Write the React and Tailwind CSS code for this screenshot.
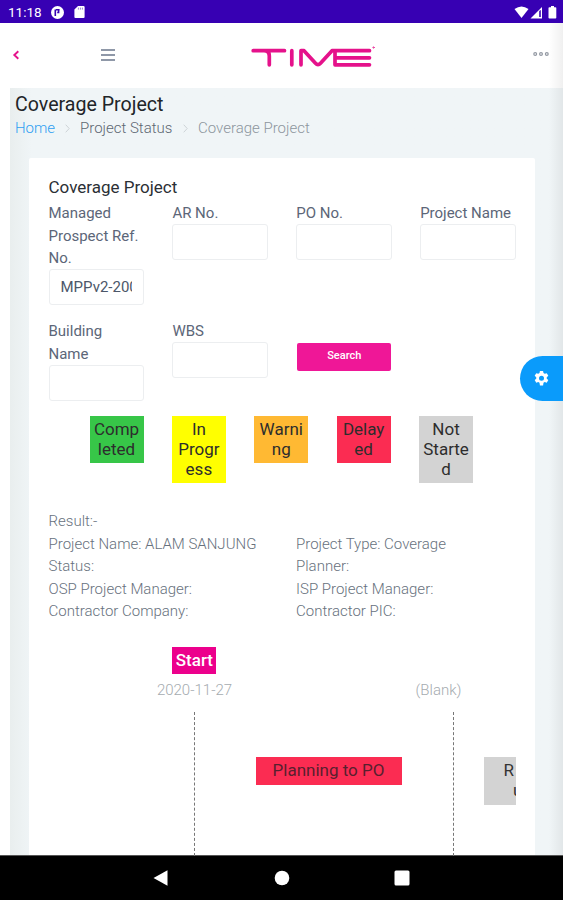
import React from "react";

const fields = [
  { label: "Managed Prospect Ref. No.", value: "MPPv2-200" },
  { label: "AR No." },
  { label: "PO No." },
  { label: "Project Name" },
  { label: "Building Name" },
  { label: "WBS" },
];

const legend = [
  { lines: ["Comp", "leted"], cls: "bg-[#37c648]" },
  { lines: ["In", "Progr", "ess"], cls: "bg-[#ffff00]" },
  { lines: ["Warni", "ng"], cls: "bg-[#ffb933]" },
  { lines: ["Delay", "ed"], cls: "bg-[#fb2c52]" },
  { lines: ["Not", "Starte", "d"], cls: "bg-[#d3d3d3]" },
];

function StatusBar() {
  return (
    <div className="flex h-[23px] shrink-0 items-center bg-[#3700b3] pt-px pr-[6px] pl-[8px] text-white">
      <span className="w-[43px] text-[13.5px] leading-[20px]">11:18</span>
      <svg className="h-[13px] w-[13px]" viewBox="0 0 13 13">
        <circle cx="6.5" cy="6.5" r="6.5" fill="#fff" />
        <path d="M4.300 10V3.400M4.900 3.800H8.600M7.600 3.400V6.500H6.200" fill="none" stroke="#3700b3" strokeWidth="1.600" />
      </svg>
      <svg className="ml-[10px] h-[12px] w-[11px]" viewBox="0 0 11 12">
        <path d="M4 0H9.500Q10.600 0 10.600 1V11Q10.600 12 9.500 12H1.400Q.4 12 .4 11V3.600Z" fill="#fff" />
        <path d="M4.400 1.600V3.600M6.400 1.600V3.600M8.400 1.600V3.600" stroke="#3700b3" strokeWidth=".5" />
      </svg>
      <svg className="ml-auto h-[13px] w-[43px]" viewBox="0 0 43 13">
        <path d="M.5 3Q7.500-2 14.500 3L7.500 12Z" fill="#fff" />
        <path d="M28 1V12.500H16.500Z" fill="#fff" />
        <path d="M25.200 5V11H26.800V4Z" fill="#3700b3" />
        <path d="M35.500 1.200H37V0H40V1.200H41.500Q42.300 1.200 42.300 2V11.700Q42.300 12.500 41.500 12.500H35.500Q34.500 12.500 34.500 11.700V2Q34.500 1.200 35.500 1.200Z" fill="#fff" />
      </svg>
    </div>
  );
}

function Logo() {
  return (
    <svg className="h-[24px] w-[126px]" viewBox="250 44 126 24" fill="none" stroke="#e5128b" strokeWidth="3.700" strokeLinecap="round" strokeLinejoin="round">
      <path d="M253.200 50.700H284.500M264 50.700Q269.300 50.700 269.300 56V64.800" />
      <path d="M291.800 50.700V64.800" />
      <path d="M301 64.800V50.700H304L315.500 63.300Q318 66 320.500 63.300L332 50.700H369.500" />
      <path d="M335 51V64.800H369.500M335 57.800H369.500" />
      <circle cx="373.500" cy="47.500" r=".7" strokeWidth=".7" />
    </svg>
  );
}

function Header() {
  return (
    <div className="flex h-[65px] shrink-0 items-center bg-white pr-[13px] pb-px pl-[12px]">
      <svg className="h-[10px] w-[8px]" viewBox="0 0 8 10" fill="none" stroke="#e5128b" strokeWidth="1.900">
        <path d="M6.300 1.200L2.300 5L6.300 8.800" />
      </svg>
      <svg className="ml-[81px] h-[12px] w-[14px]" viewBox="0 0 14 12" stroke="#6b778c" strokeWidth="1.600">
        <path d="M0 1H14M0 6H14M0 11H14" />
      </svg>
      <div className="mt-[2px] ml-[135px] flex">
        <Logo />
      </div>
      <svg className="mr-px -mt-[3px] ml-auto h-[6px] w-[16px]" viewBox="0 0 16 6" fill="none" stroke="#9298a2" strokeWidth="1.200">
        <circle cx="2.200" cy="3" r="1.400" />
        <circle cx="8" cy="3" r="1.400" />
        <circle cx="13.800" cy="3" r="1.400" />
      </svg>
    </div>
  );
}

function Crumb() {
  return (
    <svg className="h-[9px] w-[5px]" viewBox="0 0 5 9" fill="none" stroke="#cdd3d6" strokeWidth="1">
      <path d="M.7.700L4.200 4.500L.7 8.300" />
    </svg>
  );
}

function Field({ label, value }) {
  return (
    <label className="flex flex-col">
      <span className="text-[15px] leading-[22.5px] text-[#5c6678]">{label}</span>
      <span className="-mt-[0.5px] flex h-[36px] items-center overflow-hidden rounded-[3px] border border-[#eceef0] px-[11px]">
        <span className="overflow-hidden text-[15px] whitespace-nowrap text-[#4c5769]">{value}</span>
      </span>
    </label>
  );
}

function Details({ rows }) {
  return (
    <div className="flex-1">
      {rows.map((row) => (
        <div key={row}>{row}</div>
      ))}
    </div>
  );
}

function Timeline() {
  return (
    <div className="relative mt-[24.500px] h-[209px] overflow-hidden text-[17px] leading-[20px]">
      <div className="absolute top-0 left-[123.900px] h-[27px] w-[44px] bg-[#ec008c] pt-[3px] text-center font-medium text-white">Start</div>
      <div className="absolute top-[33px] left-[96px] w-[100px] text-center text-[15px] font-light text-[#a5abb0]">2020-11-27</div>
      <div className="absolute top-[33px] left-[340px] w-[100px] text-center text-[15px] font-light text-[#a5abb0]">(Blank)</div>
      <div className="absolute top-[65px] left-[145px] h-[144px] border-l border-dashed border-[#777]" />
      <div className="absolute top-[65px] left-[404px] h-[144px] border-l border-dashed border-[#777]" />
      <div className="absolute top-[110px] left-[207px] h-[28px] w-[146px] bg-[#fb2c52] pt-[3px] text-center text-[#58202f]">Planning to PO</div>
      <div className="absolute top-[110px] left-[435px] h-[48px] w-[54px] bg-[#d3d3d3] pt-[3px] text-[#333]">
        <div className="pl-[20px]">R</div>
        <div className="pl-[29.500px]">u</div>
      </div>
    </div>
  );
}

function NavBar() {
  return (
    <div className="flex h-[45px] shrink-0 items-center justify-center border-t border-[#555] bg-black">
      <svg className="h-[16px] w-[258px]" viewBox="0 0 258 16" fill="#fff">
        <path d="M.5 8L14.500 .3V15.700Z" />
        <circle cx="129" cy="8" r="7.300" />
        <rect x="241.500" y=".5" width="15" height="15" rx="1.500" />
      </svg>
    </div>
  );
}

export default function App() {
  return (
    <div className="relative flex h-[900px] w-[563px] flex-col overflow-hidden bg-white font-['Roboto',sans-serif]">
      <StatusBar />
      <Header />
      <main className="ml-[10px] flex h-[767px] flex-col bg-linear-to-r from-[#e9eeee] via-[#f0f5f7] via-[4%] to-[#f0f5f7] pt-[5px] pr-[28px] pl-[19px]">
        <h1 className="-ml-[14px] text-[19.600px] leading-[24px] whitespace-nowrap text-[#212529]">Coverage Project</h1>
        <nav className="-ml-[14px] flex h-[22px] items-center text-[15px] font-light">
          <span className="w-[50px] text-[#2e9ff2]">Home</span>
          <Crumb />
          <span className="ml-[10px] w-[103px] text-[#5d6772]">Project Status</span>
          <Crumb />
          <span className="ml-[10px] text-[#8d969e]">Coverage Project</span>
        </nav>
        <section className="mt-[19px] h-[697px] rounded-t-[2px] bg-white px-[19.500px] pt-[17px]">
          <h2 className="text-[17px] leading-[24px] text-[#2b2f35]">Coverage Project</h2>
          <div className="mt-[3px] grid grid-cols-4 gap-x-[28.500px] gap-y-[15px]">
            {fields.map((f) => (
              <Field key={f.label} {...f} />
            ))}
            <button className="mt-[22.500px] ml-px h-[28px] w-[94px] rounded-[2px] bg-[#ef1797] text-[11px] font-medium text-white">Search</button>
          </div>
          <div className="mt-[15px] ml-[41px] flex items-start gap-[28.400px] text-center text-[17px] leading-[20px]">
            {legend.map((l) => (
              <div key={l.lines[0]} className={"w-[54px] shrink-0 pt-[3px] pb-[4px] text-[#2d2d2d] " + l.cls}>
                {l.lines.map((t) => (
                  <div key={t}>{t}</div>
                ))}
              </div>
            ))}
          </div>
          <div className="mt-[27.500px] text-[15px] leading-[22.500px] font-light text-[#67717d]">
            <div>Result:-</div>
            <div className="flex gap-[28px]">
              <Details rows={["Project Name: ALAM SANJUNG", "Status:", "OSP Project Manager:", "Contractor Company:"]} />
              <Details rows={["Project Type: Coverage", "Planner:", "ISP Project Manager:", "Contractor PIC:"]} />
            </div>
          </div>
          <Timeline />
        </section>
      </main>
      <NavBar />
      <div className="absolute top-[23px] right-0 h-[832px] w-[14px] bg-linear-to-r from-transparent to-black/6" />
      <div className="absolute top-[356px] right-0 flex h-[45px] w-[43px] items-center rounded-l-full bg-[#0a9bfb] pl-[14px]">
        <svg className="h-[15px] w-[15px]" viewBox="0 0 24 24" fill="#fff">
          <path fillRule="evenodd" d="M9.500 0h5l.7 3.300 2 1.150 3.200-1.050 2.500 4.300-2.500 2.250v2.300l2.500 2.250-2.500 4.300-3.200-1.050-2 1.150L14.500 23h-5l-.7-4.100-2-1.150-3.200 1.050-2.500-4.300 2.500-2.250v-2.300L1.100 7.700l2.500-4.300 3.200 1.050 2-1.150ZM12 7.500a4 4 0 1 0 0 8 4 4 0 0 0 0-8Z" />
        </svg>
      </div>
    </div>
  );
}
